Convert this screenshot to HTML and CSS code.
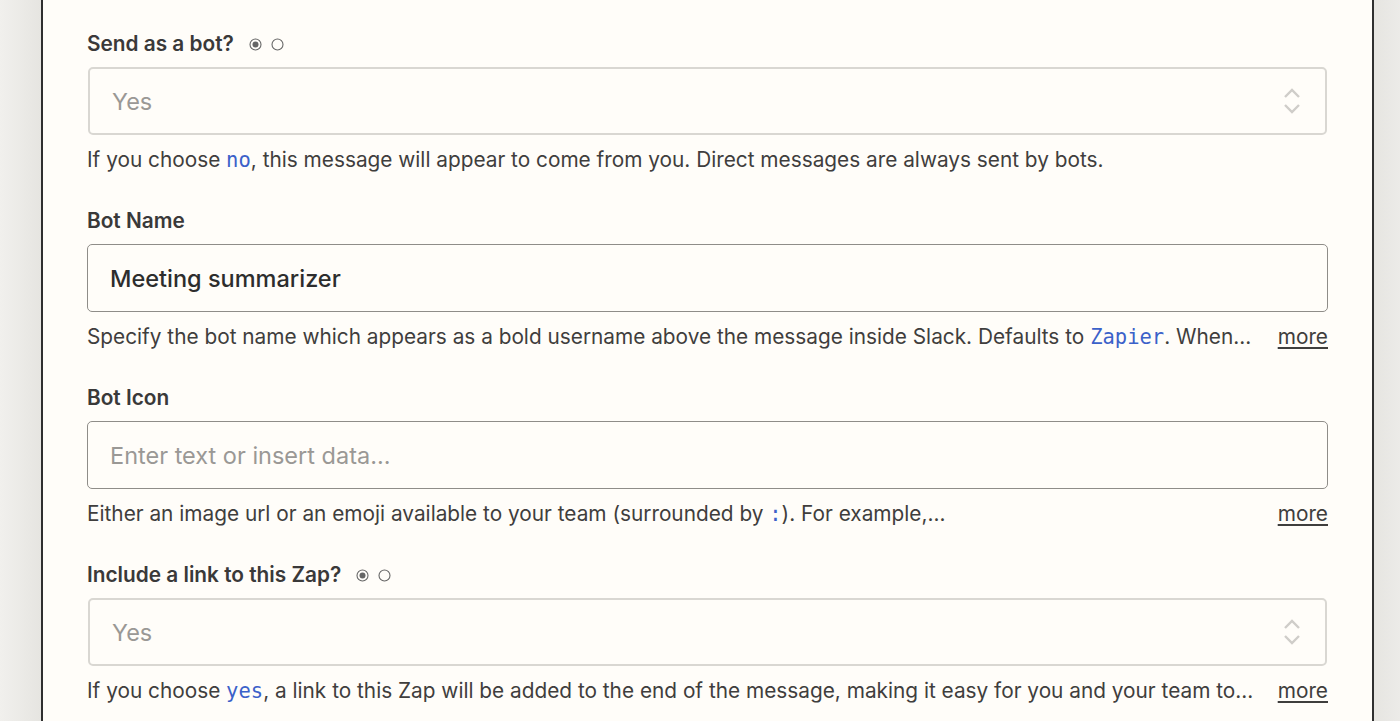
FILE: index.html
```html
<!DOCTYPE html>
<html>
<head>
<meta charset="utf-8">
<link rel="stylesheet" href="styles.css">
</head>
<body>
<div class="page">
  <div class="panel">
    <div class="field">
      <div class="label">Send as a bot?
        <span class="radios">
          <svg width="13" height="13" viewBox="0 0 13 13"><circle cx="6.5" cy="6.5" r="5.5" fill="none" stroke="#666" stroke-width="1.1"/><circle cx="6.5" cy="6.5" r="3" fill="#666"/></svg>
          <svg width="13" height="13" viewBox="0 0 13 13"><circle cx="6.5" cy="6.5" r="5.5" fill="none" stroke="#666" stroke-width="1.1"/></svg>
        </span>
      </div>
      <div class="box select">
        <span class="placeholder">Yes</span>
        <svg class="chev" width="18" height="28" viewBox="0 0 18 28"><path d="M2 10 L9 3 L16 10" fill="none" stroke="#cfcdc9" stroke-width="2.4"/><path d="M2 18 L9 25 L16 18" fill="none" stroke="#cfcdc9" stroke-width="2.4"/></svg>
      </div>
      <div class="help"><span>If you choose <code>no</code>, this message will appear to come from you. Direct messages are always sent by bots.</span></div>
    </div>

    <div class="field">
      <div class="label">Bot Name</div>
      <div class="box input"><span class="value">Meeting summarizer</span></div>
      <div class="help"><span>Specify the bot name which appears as a bold username above the message inside Slack. Defaults to <code>Zapier</code>. When...</span><a class="more">more</a></div>
    </div>

    <div class="field">
      <div class="label">Bot Icon</div>
      <div class="box input"><span class="placeholder">Enter text or insert data...</span></div>
      <div class="help"><span>Either an image url or an emoji available to your team (surrounded by <code>:</code>). For example,...</span><a class="more">more</a></div>
    </div>

    <div class="field">
      <div class="label">Include a link to this Zap?
        <span class="radios">
          <svg width="13" height="13" viewBox="0 0 13 13"><circle cx="6.5" cy="6.5" r="5.5" fill="none" stroke="#666" stroke-width="1.1"/><circle cx="6.5" cy="6.5" r="3" fill="#666"/></svg>
          <svg width="13" height="13" viewBox="0 0 13 13"><circle cx="6.5" cy="6.5" r="5.5" fill="none" stroke="#666" stroke-width="1.1"/></svg>
        </span>
      </div>
      <div class="box select">
        <span class="placeholder">Yes</span>
        <svg class="chev" width="18" height="28" viewBox="0 0 18 28"><path d="M2 10 L9 3 L16 10" fill="none" stroke="#cfcdc9" stroke-width="2.4"/><path d="M2 18 L9 25 L16 18" fill="none" stroke="#cfcdc9" stroke-width="2.4"/></svg>
      </div>
      <div class="help"><span>If you choose <code>yes</code>, a link to this Zap will be added to the end of the message, making it easy for you and your team to...</span><a class="more">more</a></div>
    </div>
  </div>
</div>
</body>
</html>
```

FILE: styles.css
```css
html, body {
  margin: 0;
  padding: 0;
  height: 100%;
  overflow: hidden;
}
body {
  background: linear-gradient(to right, #f1f0ed 0px, #e6e5e1 41px, #e6e5e1 1374px, #ecebe8 1400px);
  font-family: Inter, "Noto Sans", sans-serif;
}
.page {
  display: flex;
  height: 100%;
  padding-left: 41px;
  box-sizing: border-box;
}
.panel {
  width: 1333px;
  height: 100%;
  box-sizing: border-box;
  background: #fffdf9;
  border-left: 2px solid #2f2f2f;
  border-right: 2px solid #2f2f2f;
  padding: 33px 44px 0 44px;
  display: flex;
  flex-direction: column;
  gap: 37px;
}
.field {
  display: flex;
  flex-direction: column;
}
.label {
  font-size: 20.8px;
  font-weight: 600;
  color: #3a3939;
  line-height: 22px;
  display: flex;
  align-items: center;
}
.radios {
  display: inline-flex;
  gap: 9px;
  margin-left: 15px;
}
.box {
  margin-top: 12px;
  height: 68px;
  box-sizing: border-box;
  border-radius: 5px;
  display: flex;
  align-items: center;
  padding: 0 22px;
  font-size: 23.5px;
}
.select {
  border: 2px solid #d9d7d2;
  margin-left: 1px;
  margin-right: 1px;
  justify-content: space-between;
}
.input {
  border: 1px solid #8f8d89;
}
.placeholder {
  color: #9a9895;
}
.value {
  color: #2d2d2d;
  font-weight: 500;
}
.chev {
  margin-right: 2px;
}
.help {
  margin-top: 12px;
  font-size: 20.8px;
  line-height: 26px;
  color: #3f3e3d;
  display: flex;
  justify-content: space-between;
  white-space: nowrap;
}
code {
  font-family: "DejaVu Sans Mono", monospace;
  font-size: 20.5px;
  color: #3b61c9;
}
.more {
  text-decoration: underline;
  color: #3f3e3d;
  text-underline-offset: 3px;
}
```
